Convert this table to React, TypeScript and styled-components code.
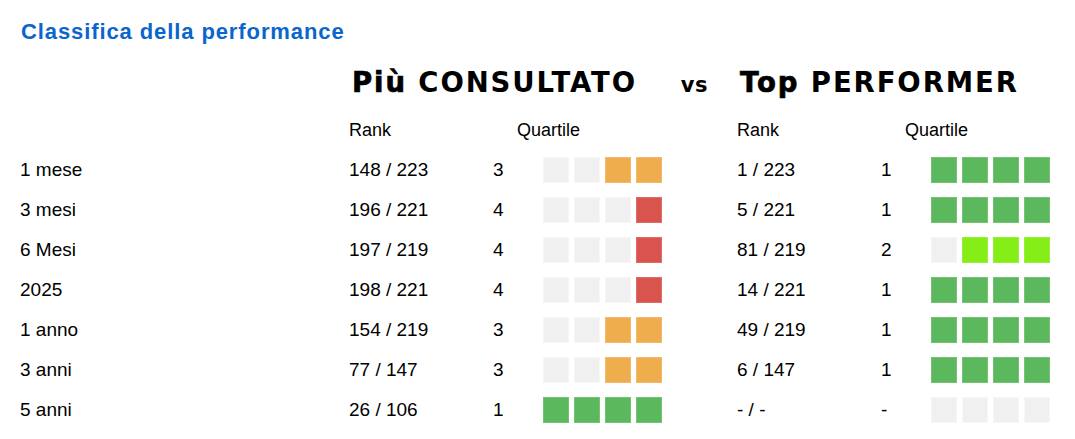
import React from 'react';
import styled, {createGlobalStyle} from 'styled-components';

type Quartile = number | null;

interface RankRow {
  label: string;
  mostViewed: {rank: string; q: Quartile};
  top: {rank: string; q: Quartile};
}

const rows: RankRow[] = [
  {label: '1 mese', mostViewed: {rank: '148 / 223', q: 3}, top: {rank: '1 / 223', q: 1}},
  {label: '3 mesi', mostViewed: {rank: '196 / 221', q: 4}, top: {rank: '5 / 221', q: 1}},
  {label: '6 Mesi', mostViewed: {rank: '197 / 219', q: 4}, top: {rank: '81 / 219', q: 2}},
  {label: '2025', mostViewed: {rank: '198 / 221', q: 4}, top: {rank: '14 / 221', q: 1}},
  {label: '1 anno', mostViewed: {rank: '154 / 219', q: 3}, top: {rank: '49 / 219', q: 1}},
  {label: '3 anni', mostViewed: {rank: '77 / 147', q: 3}, top: {rank: '6 / 147', q: 1}},
  {label: '5 anni', mostViewed: {rank: '26 / 106', q: 1}, top: {rank: '- / -', q: null}},
];

const quartileColor: Record<number, string> = {
  1: '#5cb85c',
  2: '#84ee16',
  3: '#f0ad4e',
  4: '#d9534f',
};

// quartile 1 fills all four boxes, quartile 4 only the last one
const QuartileBar = ({q}: {q: Quartile}) => (
  <Boxes>
    {[0, 1, 2, 3].map(i => (
      <Box key={i} color={q !== null && i >= q - 1 ? quartileColor[q] : undefined} />
    ))}
  </Boxes>
);

export default function App() {
  return (
    <>
      <GlobalStyle />
      <Page>
        <Title>Classifica della performance</Title>
        <Table>
          <Heading>
            <span>
              <Strong>Più</Strong> CONSULTATO
            </span>
            <Vs>vs</Vs>
          </Heading>
          <Heading wide>
            <span>
              <Strong>Top</Strong> PERFORMER
            </span>
          </Heading>

          <Cell />
          <HeadCell>Rank</HeadCell>
          <QuartileHead>Quartile</QuartileHead>
          <HeadCell>Rank</HeadCell>
          <QuartileHead>Quartile</QuartileHead>

          {rows.map(r => (
            <React.Fragment key={r.label}>
              <Cell>{r.label}</Cell>
              <Cell>{r.mostViewed.rank}</Cell>
              <Num>{r.mostViewed.q ?? '-'}</Num>
              <Cell>
                <QuartileBar q={r.mostViewed.q} />
              </Cell>
              <Cell>{r.top.rank}</Cell>
              <Num>{r.top.q ?? '-'}</Num>
              <Cell>
                <QuartileBar q={r.top.q} />
              </Cell>
            </React.Fragment>
          ))}
        </Table>
      </Page>
    </>
  );
}

const GlobalStyle = createGlobalStyle`
  body {
    margin: 0;
    background: #fff;
    font-family: "Liberation Sans", Arial, sans-serif;
    color: #000;
  }
`;

const Page = styled.div`
  padding: 19px 0 0 20px;
  width: 1075px;
  height: 439px;
  box-sizing: border-box;
  overflow: hidden;
`;

const Title = styled.h1`
  margin: 0 0 15px 1px;
  font-size: 22px;
  line-height: 26px;
  font-weight: bold;
  letter-spacing: 0.9px;
  color: #0a66cc;
`;

const Table = styled.div`
  display: grid;
  grid-template-columns: 329px 143px 51px 194px 143px 51px 120px;
  grid-template-rows: 50px repeat(8, 40px);
  font-size: 19px;
`;

const Heading = styled.div<{wide?: boolean}>`
  grid-column: ${p => (p.wide ? '5 / 8' : '2 / 5')};
  display: flex;
  justify-content: space-between;
  align-items: baseline;
  padding: 6px ${p => (p.wide ? '0' : '29px')} 0 3px;
  align-self: start;
  font-family: "DejaVu Sans", "Liberation Sans", sans-serif;
  font-size: 27.5px;
  line-height: 32px;
  font-weight: bold;
  letter-spacing: 1.9px;
  white-space: nowrap;
`;

const Strong = styled.span`
  -webkit-text-stroke: 0.7px #000;
`;

const Vs = styled.span`
  font-size: 21px;
  letter-spacing: 0.5px;
`;

const Cell = styled.div`
  display: flex;
  align-items: center;
  white-space: nowrap;
`;

const HeadCell = styled(Cell)`
  font-size: 18px;
`;

const QuartileHead = styled(HeadCell)`
  grid-column: span 2;
  padding-left: 25px;
`;

const Num = styled(Cell)`
  padding-left: 1px;
`;

const Boxes = styled.div`
  display: flex;
  gap: 5px;
`;

const Box = styled.div<{color?: string}>`
  width: 26px;
  height: 26px;
  box-sizing: border-box;
  background: ${p => p.color ?? '#f0f0f0'};
  border: 1px solid ${p => (p.color ? 'rgba(255, 255, 255, 0.15)' : '#f7f7f7')};
`;
